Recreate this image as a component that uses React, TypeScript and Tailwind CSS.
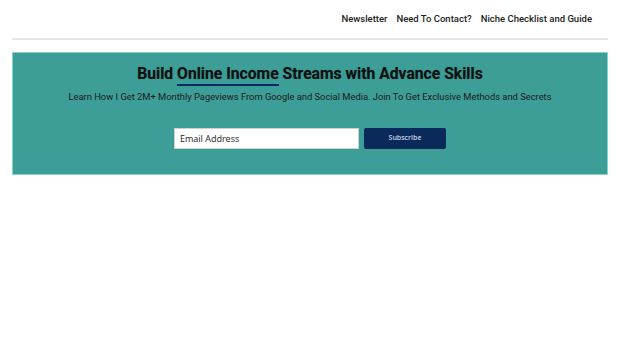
import React from 'react';

const navLinks = ['Newsletter', 'Need To Contact?', 'Niche Checklist and Guide'];

const App: React.FC = () => {
  return (
    <div className="min-h-screen bg-white font-['Roboto',sans-serif]">
      {/* top navigation */}
      <header className="flex justify-end pt-[12px] pr-[28px] h-[38px]">
        <nav className="flex gap-[9px] text-[9.5px] font-medium text-[#222]">
          {navLinks.map((link) => (
            <a key={link} href="#" className="leading-[14px]">
              {link}
            </a>
          ))}
        </nav>
      </header>
      <div className="mx-[12px] h-[2px] bg-[#e6e6e6]" />

      {/* newsletter banner */}
      <section className="mx-[12px] mt-[12px] h-[123px] bg-[#3d9e98] border border-[#86d3cb] flex flex-col items-center pt-[11px]">
        <h1 className="text-[15.7px] font-bold text-[#111] leading-[20px] [text-shadow:0_0_1px_rgba(0,0,0,0.4)]">
          Build{' '}
          <span className="border-b-2 border-[#0a2a66] pb-[1px]">Online Income</span>{' '}
          Streams with Advance Skills
        </h1>
        <p className="mt-[6px] text-[9.35px] text-[#1a1a1a] leading-[14px]">
          Learn How I Get 2M+ Monthly Pageviews From Google and Social Media. Join To Get Exclusive Methods and Secrets
        </p>
        <form className="mt-[24px] flex gap-[5px]" onSubmit={(e) => e.preventDefault()}>
          <input
            type="email"
            placeholder="Email Address"
            className="w-[185px] h-[21px] bg-white border border-[#cfcfcf] px-[5px] text-[9px] font-['Open_Sans',sans-serif] placeholder:text-[#222] outline-none"
          />
          <button
            type="submit"
            className="w-[82px] h-[21px] bg-[#0b2a5c] rounded-[2px] text-[7px] text-[#c9d4e6] font-semibold font-['Open_Sans',sans-serif]"
          >
            Subscribe
          </button>
        </form>
      </section>
    </div>
  );
};

export default App;
